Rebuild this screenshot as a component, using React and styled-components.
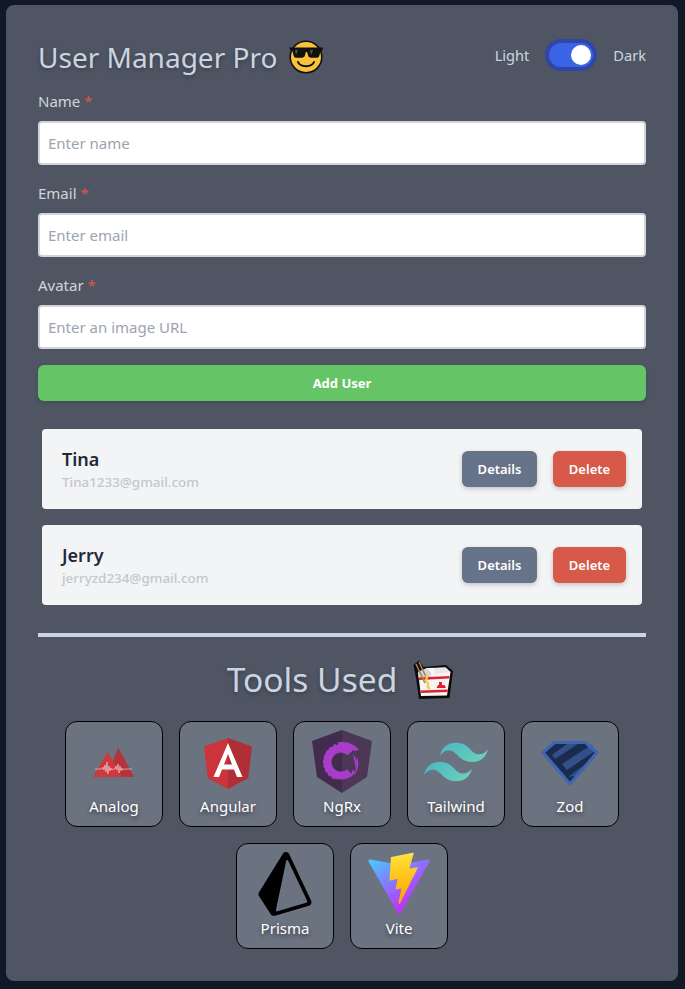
import styled, { createGlobalStyle } from "styled-components";
import { SiPrisma } from "react-icons/si";

const Global = createGlobalStyle`
  body {
    margin: 0;
    background: #111827;
    font-family: "Noto Sans", "Open Sans", sans-serif;
  }
  * {
    box-sizing: border-box;
  }
`;

const users = [
  { name: "Tina", email: "Tina1233@gmail.com" },
  { name: "Jerry", email: "jerryzd234@gmail.com" },
];

const fields = [
  { label: "Name", placeholder: "Enter name" },
  { label: "Email", placeholder: "Enter email" },
  { label: "Avatar", placeholder: "Enter an image URL" },
];

const CoolEmoji = () => (
  <svg width="36" height="36" viewBox="0 0 36 36">
    <circle cx="18" cy="18" r="15.8" fill="#f7c33c" stroke="#111" strokeWidth="1.6" />
    <path d="M1 8.500h34l-.4 2.600-2 .8-1.300 4.800c-.4 1.400-1.400 2-2.800 2h-5.400c-1.600 0-2.600-.8-3-2.200l-1-3.600h-1.200l-1 3.600c-.4 1.400-1.400 2.200-3 2.200H8.500c-1.400 0-2.400-.6-2.800-2l-1.300-4.800-2-.8z" fill="#111" />
    <path d="M7 11l3 0-2 5zM22 11l3 0-2 5z" fill="#555" />
    <path d="M10 23c2 5.500 14 5.500 16 0" fill="none" stroke="#111" strokeWidth="2" strokeLinecap="round" />
  </svg>
);

const TakeoutEmoji = () => (
  <svg width="40" height="40" viewBox="0 0 40 40">
    <path d="M0.500 6 L6 1.500 L10.500 8 L33 6 L40 12 L36.500 39 L6 40 L3 19z" fill="#0c0c0c" />
    <path d="M5 13 L14 9 L32.500 8.500 L37.500 13 L34 36.500 L8 37z" fill="#f4f4f4" />
    <path d="M5 13 L14 9 L18 14 L18 18 L5.500 18.500z" fill="#d6d6d6" />
    <path d="M22 9 L32.500 8.500 L37.500 13 L22 15z" fill="#e6e6e6" />
    <path d="M5.500 18.500 L36.500 17 L36.200 19.500 L6 21z" fill="#e2202c" />
    <path d="M7.500 31.500 L34.800 30.500 L34.500 33 L7.800 34z" fill="#e2202c" />
    <path d="M26 23h3v3h2.500l1.500 3h-9.500l1.500-3H26z" fill="#e2202c" />
    <path d="M3 5 L12 24 M6 3 L14 20" stroke="#a9815a" strokeWidth="1.600" />
    <path d="M13 16c3 3-1 4 0 6s3 1 2 4 1 3 2 4" fill="none" stroke="#f6cc4a" strokeWidth="2.200" />
  </svg>
);

const AnalogIcon = () => (
  <svg width="64" height="64" viewBox="0 0 64 64">
    <path d="M36.300 17.700 L52 47 H24z" fill="#b4343a" />
    <path d="M25.700 22 L40 47 H11z" fill="#cc3a3f" />
    <path
      d="M13 39h7l1-2 1 3 1-5 1 7 1-10 1 12 1-8 1 5 1-3 1 2 1-1h2l1-3 1 4 1-6 1 9 1-7 1 5 1-3 1 2 1-1h8"
      fill="none"
      stroke="#f3c5c5"
      strokeWidth="0.700"
    />
  </svg>
);

const AngularIcon = () => (
  <svg width="64" height="64" viewBox="0 0 64 64">
    <path d="M32 8 L8 16.500 L11.700 48 L32 59z" fill="#cc343c" />
    <path d="M32 8 L56 16.500 L52.300 48 L32 59z" fill="#b02e36" />
    <path
      fillRule="evenodd"
      d="M32 13 L17.500 47 H23 L26 39.500 H38 L41 47 H46.500z M32 24 L36 34.500 H28z"
      fill="#fff"
    />
  </svg>
);

const NgrxIcon = () => (
  <svg width="64" height="64" viewBox="0 0 64 64">
    <path d="M32 0 L2 11 L7 47 L32 63z" fill="#412c4e" />
    <path d="M32 0 L62 11 L57 47 L32 63z" fill="#4c3757" />
    <g fill="none" stroke="#a93cc9">
      <path d="M40.500 22.500A13.500 13.500 0 1 0 39.700 42.300" strokeWidth="8" />
      <path d="M26 15A18 18 0 0 0 26 49" strokeWidth="2" strokeDasharray="3 2" />
    </g>
    <g fill="#a93cc9">
      <path d="M28 12.500C37 11 44 14 49 20L45 21C41 19 38 19 34 21L27 17z" />
      <path d="M43 24C47 28 48 34 46 40C45 34 44 29 43 24z" />
      <path d="M47 27C49.500 33 48.500 40 44 46C46 40 47 34 47 27z" />
      <path d="M42.500 40C42 43 40 46 37 48C41 47.500 44 45 45 41.500z" />
    </g>
  </svg>
);

const TailwindIcon = () => (
  <svg width="64" height="64" viewBox="2 2 20 20">
    <defs>
      <linearGradient id="tw" x1="0" y1="0" x2="1" y2="0.500">
        <stop offset="0" stopColor="#3fb0c8" />
        <stop offset="1" stopColor="#70d2b8" />
      </linearGradient>
    </defs>
    <path
      fill="url(#tw)"
      d="M12 6c-2.67 0-4.33 1.33-5 4 1-1.33 2.17-1.83 3.500-1.500.76.19 1.31.74 1.91 1.350.98 1 2.120 2.150 4.590 2.150 2.670 0 4.330-1.330 5-4-1 1.330-2.170 1.830-3.500 1.500-.76-.19-1.300-.74-1.910-1.350C15.610 7.150 14.470 6 12 6zm-5 6c-2.670 0-4.330 1.330-5 4 1-1.330 2.170-1.830 3.500-1.500.76.19 1.300.74 1.910 1.350C8.390 16.850 9.530 18 12 18c2.670 0 4.330-1.330 5-4-1 1.330-2.170 1.830-3.500 1.500-.76-.19-1.310-.74-1.910-1.350C10.610 13.150 9.470 12 7 12z"
    />
  </svg>
);

const ZodIcon = () => (
  <svg width="64" height="64" viewBox="0 0 64 64">
    <path d="M5 22.500 L16.500 12.500 H47.500 L59 22.500 L32 54z" fill="#1a2b4f" />
    <path d="M14 25 L31 12.500 H42 L17 29z M24 34 L54 14.500 L57 21 L29 40z M30 47 L46 35 L38 46z" fill="#34508a" />
    <path d="M5 22.500 L16.500 12.500 H47.500 L59 22.500 L32 54z" fill="none" stroke="#3f66b0" strokeWidth="3.200" strokeLinejoin="round" />
  </svg>
);

const ViteIcon = () => (
  <svg width="64" height="64" viewBox="0 0 410 404">
    <defs>
      <linearGradient id="v1" gradientUnits="userSpaceOnUse" x1="6" y1="33" x2="235" y2="344">
        <stop stopColor="#41D1FF" />
        <stop offset="1" stopColor="#BD34FE" />
      </linearGradient>
      <linearGradient id="v2" gradientUnits="userSpaceOnUse" x1="194.650" y1="8.820" x2="236.080" y2="292.990">
        <stop stopColor="#FFEA83" />
        <stop offset="0.083" stopColor="#FFDD35" />
        <stop offset="1" stopColor="#FFA800" />
      </linearGradient>
    </defs>
    <path
      fill="url(#v1)"
      d="M399.641 59.525L215.643 388.545C211.844 395.338 202.084 395.378 198.228 388.618L10.582 59.556C6.381 52.190 12.680 43.267 21.028 44.759L205.223 77.682C206.398 77.892 207.601 77.890 208.776 77.676L389.119 44.806C397.439 43.289 403.768 52.143 399.641 59.525Z"
    />
    <path
      fill="url(#v2)"
      d="M292.965 1.574L156.801 28.255C154.563 28.694 152.906 30.590 152.771 32.866L144.395 174.330C144.198 177.662 147.258 180.248 150.510 179.498L188.420 170.749C191.967 169.931 195.172 173.055 194.443 176.622L183.180 231.775C182.422 235.487 185.907 238.661 189.532 237.560L212.947 230.446C216.577 229.344 220.065 232.527 219.297 236.242L201.398 322.875C200.278 328.294 207.486 331.249 210.492 326.603L212.500 323.500L323.454 102.072C325.312 98.365 322.108 94.137 318.036 94.923L279.014 102.454C275.347 103.161 272.227 99.746 273.262 96.158L298.731 7.867C299.767 4.273 296.636 0.855 292.965 1.574Z"
    />
  </svg>
);

const tools = [
  { name: "Analog", Icon: AnalogIcon },
  { name: "Angular", Icon: AngularIcon },
  { name: "NgRx", Icon: NgrxIcon },
  { name: "Tailwind", Icon: TailwindIcon },
  { name: "Zod", Icon: ZodIcon },
  { name: "Prisma", Icon: () => <SiPrisma size={64} color="#000" /> },
  { name: "Vite", Icon: ViteIcon },
];

export default function App() {
  return (
    <>
      <Global />
      <Page>
        <Card>
          <Header>
            <Title>
              User Manager Pro
              <CoolEmoji />
            </Title>
            <ThemeToggle>
              <span>Light</span>
              <Track>
                <Knob />
              </Track>
              <span>Dark</span>
            </ThemeToggle>
          </Header>

          {fields.map(({ label, placeholder }) => (
            <Field key={label}>
              <Label>
                {label} <Required>*</Required>
              </Label>
              <Input placeholder={placeholder} />
            </Field>
          ))}
          <AddButton>Add User</AddButton>

          <UserList>
            {users.map(({ name, email }) => (
              <UserRow key={name}>
                <div>
                  <UserName>{name}</UserName>
                  <UserEmail>{email}</UserEmail>
                </div>
                <Actions>
                  <ActionButton $color="#667389" $width="75px">
                    Details
                  </ActionButton>
                  <ActionButton $color="#d6594a" $width="73px">
                    Delete
                  </ActionButton>
                </Actions>
              </UserRow>
            ))}
          </UserList>

          <Divider />

          <ToolsTitle>
            Tools Used
            <TakeoutEmoji />
          </ToolsTitle>
          <ToolGrid>
            {tools.map(({ name, Icon }) => (
              <Tool key={name}>
                <Icon />
                <ToolName>{name}</ToolName>
              </Tool>
            ))}
          </ToolGrid>
        </Card>
      </Page>
    </>
  );
}

const Page = styled.div`
  padding: 5px 7px 8px 6px;
`;

const Card = styled.div`
  background: #4f5563;
  border-radius: 8px;
  padding: 32px;
`;

const Header = styled.div`
  display: flex;
  justify-content: space-between;
  align-items: flex-start;
  margin-bottom: 12px;
`;

const Title = styled.h1`
  display: flex;
  align-items: center;
  gap: 11px;
  height: 40px;
  margin: 0;
  font-size: 28px;
  font-weight: 400;
  color: #cbd5e1;
  text-shadow: 0 2px 4px rgba(0, 0, 0, 0.3);
`;

const ThemeToggle = styled.div`
  display: flex;
  align-items: center;
  gap: 20px;
  padding-top: 6px;
  font-size: 14.6px;
  color: #cbd5e1;
`;

const Track = styled.div`
  display: flex;
  justify-content: flex-end;
  align-items: center;
  width: 44px;
  height: 24px;
  padding: 2px;
  border-radius: 12px;
  background: #3b63e5;
  box-shadow: 0 0 0 4px #2f45a8;
`;

const Knob = styled.div`
  width: 20px;
  height: 20px;
  border-radius: 50%;
  background: #fff;
`;

const Field = styled.div`
  margin-bottom: 16px;
`;

const Label = styled.label`
  display: block;
  height: 24px;
  margin-bottom: 8px;
  font-size: 15px;
  line-height: 24px;
  color: #d1d5db;
`;

const Required = styled.span`
  color: #d6594a;
`;

const Input = styled.input`
  display: block;
  width: 100%;
  height: 44px;
  padding: 0 8px;
  border: 2px solid #d1d5db;
  border-radius: 4px;
  background: #fff;
  font-family: inherit;
  font-size: 15px;
  &::placeholder {
    color: #9ca3af;
  }
`;

const AddButton = styled.button`
  display: block;
  width: 100%;
  height: 36px;
  border: none;
  border-radius: 6px;
  background: #65c466;
  box-shadow: 0 2px 4px rgba(0, 0, 0, 0.15);
  font-family: inherit;
  font-size: 13px;
  font-weight: 700;
  color: #fff;
`;

const UserList = styled.div`
  display: flex;
  flex-direction: column;
  gap: 16px;
  margin: 28px 4px;
`;

const UserRow = styled.div`
  display: flex;
  justify-content: space-between;
  align-items: center;
  height: 80px;
  padding: 0 16px 0 20px;
  border-radius: 4px;
  background: #f3f4f6;
`;

const UserName = styled.div`
  font-size: 18px;
  font-weight: 600;
  line-height: 26px;
  color: #1f2937;
`;

const UserEmail = styled.div`
  font-size: 13.4px;
  font-weight: 500;
  line-height: 20px;
  color: #c4c7cc;
`;

const Actions = styled.div`
  display: flex;
  gap: 16px;
`;

const ActionButton = styled.button`
  width: ${(p) => p.$width};
  height: 36px;
  padding: 0;
  border: none;
  border-radius: 6px;
  background: ${(p) => p.$color};
  box-shadow: 0 2px 5px rgba(0, 0, 0, 0.2);
  font-family: inherit;
  font-size: 13px;
  font-weight: 600;
  color: #fff;
`;

const Divider = styled.div`
  height: 4px;
  margin-bottom: 18px;
  background: #cbd5e1;
`;

const ToolsTitle = styled.h2`
  display: flex;
  justify-content: center;
  align-items: center;
  gap: 16px;
  height: 48px;
  margin: 0 0 18px;
  padding-right: 4px;
  font-size: 33.6px;
  font-weight: 400;
  color: #cbd5e1;
  text-shadow: 0 2px 4px rgba(0, 0, 0, 0.3);
`;

const ToolGrid = styled.div`
  display: flex;
  flex-wrap: wrap;
  justify-content: center;
  gap: 16px;
`;

const Tool = styled.div`
  display: flex;
  flex-direction: column;
  align-items: center;
  width: 98px;
  height: 106px;
  padding-top: 8px;
  border: 1px solid #000;
  border-radius: 12px;
  background: #6b7280;
`;

const ToolName = styled.span`
  font-size: 15px;
  line-height: 24px;
  color: #fff;
  text-shadow: 0 2px 4px rgba(0, 0, 0, 0.5);
`;
